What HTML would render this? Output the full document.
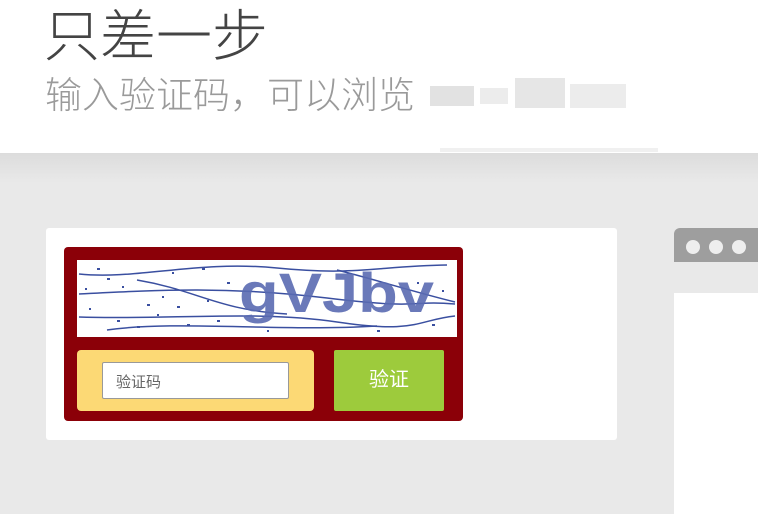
<!DOCTYPE html>
<html><head><meta charset="utf-8"><style>
*{margin:0;padding:0;box-sizing:border-box}
body{width:758px;height:514px;overflow:hidden;background:#e9e9e9;font-family:"Liberation Sans","Noto Sans CJK SC",sans-serif;position:relative}
.hdr{position:absolute;left:0;top:0;width:758px;height:153px;background:#fff}
.sh{position:absolute;left:0;top:153px;width:758px;height:30px;background:linear-gradient(#dcdcdc,#e9e9e9)}
h1{position:absolute;left:44px;top:2px;font-size:56px;font-weight:300;color:#444;line-height:70px;white-space:nowrap}
h2{position:absolute;left:45px;top:72px;font-size:37px;font-weight:300;color:#9a9a9a;line-height:48px;white-space:nowrap}
.px{position:absolute;background:#ccc}
.card{position:absolute;left:46px;top:228px;width:571px;height:212px;background:#fff;border-radius:3px}
.red{position:absolute;left:64px;top:247px;width:399px;height:174px;background:#8b0008;border-radius:4px}
.cap{position:absolute;left:77px;top:260px;width:380px;height:77px;background:#fff}
.yel{position:absolute;left:77px;top:350px;width:237px;height:61px;background:#fcd975;border-radius:4px}
.inp{position:absolute;left:102px;top:362px;width:187px;height:37px;background:#fff;border:1px solid #999;border-radius:2px;font-size:15px;color:#666;padding:8px 0 0 13px}
.btn{position:absolute;left:334px;top:350px;width:110px;height:61px;background:#9dcb3c;border-radius:2px;color:#fff;font-size:20px;text-align:center;line-height:61px}
.bar{position:absolute;left:674px;top:228px;width:84px;height:34px;background:#9e9e9e;border-radius:6px 0 0 0}
.dot{position:absolute;top:240px;width:14px;height:14px;border-radius:50%;background:#eee}
.wh{position:absolute;left:674px;top:293px;width:84px;height:221px;background:#fff}
</style></head><body>
<div class="hdr"></div><div class="sh"></div>
<h1>只差一步</h1>
<h2>输入验证码，可以浏览</h2>
<div class="px" style="left:430px;top:86px;width:44px;height:20px;background:#e2e2e2"></div>
<div class="px" style="left:480px;top:88px;width:28px;height:16px;background:#ececec"></div>
<div class="px" style="left:515px;top:78px;width:50px;height:30px;background:#e6e6e6"></div>
<div class="px" style="left:570px;top:84px;width:56px;height:24px;background:#ececec"></div>
<div class="px" style="left:440px;top:148px;width:218px;height:4px;background:#f0f0f0"></div>
<div class="card"></div>
<div class="red"></div>
<div class="cap"><svg width="380" height="77" viewBox="0 0 380 77">
<g stroke="#3a4fa0" stroke-width="1.5" fill="none">
<path d="M2 14 C60 20 120 0 200 8 S300 6 370 5"/>
<path d="M2 34 C80 30 150 26 250 38 S330 40 378 44"/>
<path d="M2 57 C90 60 180 50 260 62 S340 60 378 56"/>
<path d="M30 70 C100 60 200 72 300 66"/>
<path d="M60 20 C120 30 140 50 210 54"/>
<path d="M260 10 C300 20 330 30 378 42"/>
</g>
<text x="162" y="52" font-family="Liberation Sans" font-weight="bold" font-size="56" fill="#5a6bb2" opacity="0.9" textLength="195" lengthAdjust="spacingAndGlyphs">gVJbv</text>
<g fill="#3a4fa0">
<rect x="20" y="8" width="3" height="2"/><rect x="45" y="26" width="2" height="2"/><rect x="70" y="44" width="3" height="2"/><rect x="95" y="12" width="2" height="2"/><rect x="110" y="64" width="3" height="2"/><rect x="130" y="40" width="2" height="2"/><rect x="150" y="22" width="3" height="2"/><rect x="12" y="48" width="2" height="2"/><rect x="60" y="66" width="3" height="2"/><rect x="85" y="36" width="2" height="2"/><rect x="300" y="70" width="3" height="2"/><rect x="340" y="22" width="2" height="2"/><rect x="355" y="64" width="3" height="2"/><rect x="190" y="70" width="2" height="2"/><rect x="40" y="60" width="3" height="2"/><rect x="125" y="8" width="3" height="2"/><rect x="30" y="18" width="3" height="2"/><rect x="80" y="54" width="2" height="2"/><rect x="140" y="60" width="3" height="2"/><rect x="8" y="28" width="2" height="2"/><rect x="100" y="46" width="3" height="2"/><rect x="365" y="30" width="2" height="2"/></g>
</svg></div>
<div class="yel"></div>
<div class="inp">验证码</div>
<div class="btn">验证</div>
<div class="bar"></div>
<div class="dot" style="left:686px"></div><div class="dot" style="left:709px"></div><div class="dot" style="left:732px"></div>
<div class="wh"></div>
</body></html>
